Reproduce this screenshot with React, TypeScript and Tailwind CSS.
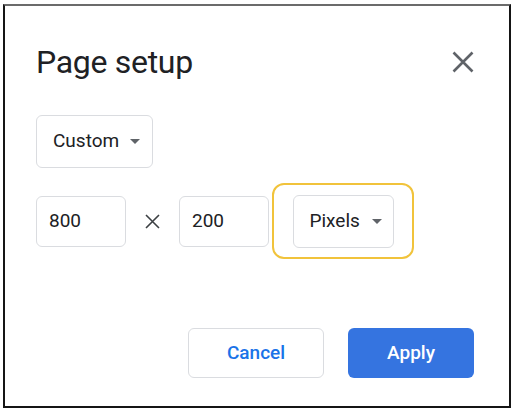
import React from "react";

const Caret = () => (
  <svg width="10" height="5" viewBox="0 0 10 5" className="shrink-0">
    <path d="M0 0 L10 0 L5 5 Z" fill="#5f6368" />
  </svg>
);

export default function App() {
  return (
    <div
      className="w-[515px] h-[410px] bg-white pl-[3px] pt-[4px] pr-[4px] pb-[2px]"
      style={{ fontFamily: "Roboto, 'Liberation Sans', sans-serif" }}
    >
      <div className="h-full w-full border-2 border-[#151515] border-t-[#6b6b6b] flex flex-col">
        {/* header */}
        <div className="flex items-center pl-[31px] pr-[35px] mt-[38px] h-[36px]">
          <h1 className="text-[32px] leading-[36px] text-[#202124] font-normal tracking-[-0.3px]">
            Page setup
          </h1>
          <button className="ml-auto w-[22px] h-[22px] flex items-center justify-center">
            <svg width="22" height="22" viewBox="0 0 22 22">
              <path d="M1.5 1.5 L20.5 20.5 M20.5 1.5 L1.5 20.5" stroke="#5f6368" strokeWidth="2.6" />
            </svg>
          </button>
        </div>

        {/* Custom select */}
        <div className="pl-[31px] mt-[35px]">
          <div className="w-[117px] h-[53px] border border-[#dadce0] rounded-[6px] flex items-center pl-[16px] pr-[12px] justify-between">
            <span className="text-[19px] text-[#202124]">Custom</span>
            <Caret />
          </div>
        </div>

        {/* size row */}
        <div className="pl-[31px] mt-[15px] flex items-center">
          <div className="w-[90px] h-[51px] border border-[#dadce0] rounded-[6px] flex items-center pl-[12px]">
            <span className="text-[19px] text-[#202124]">800</span>
          </div>
          <div className="w-[15px] h-[15px] mx-[19px]">
            <svg width="15" height="15" viewBox="0 0 15 15">
              <path d="M1 1 L14 14 M14 1 L1 14" stroke="#3c4043" strokeWidth="1.6" />
            </svg>
          </div>
          <div className="w-[90px] h-[51px] border border-[#dadce0] rounded-[6px] flex items-center pl-[12px]">
            <span className="text-[19px] text-[#202124]">200</span>
          </div>
          <div className="ml-[3px] w-[142px] h-[76px] border-2 border-[#f1c33b] rounded-[12px] flex items-center justify-center">
            <div className="w-[101px] h-[53px] border border-[#dadce0] rounded-[6px] flex items-center pl-[16px] pr-[11px] justify-between">
              <span className="text-[19px] text-[#202124]">Pixels</span>
              <Caret />
            </div>
          </div>
        </div>

        {/* buttons */}
        <div className="mt-[69px] pr-[35px] flex justify-end gap-[24px]">
          <button className="w-[136px] h-[50px] border border-[#dadce0] rounded-[6px] bg-white text-[#1a73e8] text-[19px] font-medium">
            Cancel
          </button>
          <button className="w-[126px] h-[50px] rounded-[6px] bg-[#3574e0] text-white text-[19px] font-medium">
            Apply
          </button>
        </div>
      </div>
    </div>
  );
}
